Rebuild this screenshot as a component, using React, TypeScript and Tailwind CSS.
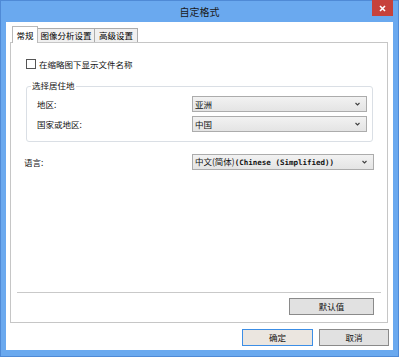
import React from "react";

const cjk = { fontFamily: '"Noto Sans CJK SC", "Microsoft YaHei", sans-serif' };

function Chevron() {
  return (
    <svg width="5" height="4" viewBox="0 0 5 4" className="shrink-0">
      <path d="M0.5 1 L2.5 3 L4.5 1" stroke="#404040" strokeWidth="1.1" fill="none" />
    </svg>
  );
}

function Select({ text, w, children }: { text?: string; w: string; children?: React.ReactNode }) {
  return (
    <div
      className={`${w} h-[16px] flex items-center justify-between pl-[2px] pr-[6px] border border-[#acacac] bg-gradient-to-b from-[#f2f2f2] to-[#e4e4e4] text-[8.5px] text-[#111] leading-none`}
    >
      <span>{children ?? text}</span>
      <Chevron />
    </div>
  );
}

function Btn({ text, w, focused }: { text: string; w: string; focused?: boolean }) {
  return (
    <div
      className={`${w} h-[17px] flex items-center justify-center text-[8.5px] leading-none text-[#111] border ${
        focused ? "border-[#3c8ee6] bg-[#ebe6e0]" : "border-[#8a8a8a] bg-[#e1e1e1]"
      }`}
    >
      {text}
    </div>
  );
}

export default function App() {
  return (
    <div className="w-[399px] h-[357px] bg-[#6aa9ef] border border-[#4f8ad6] flex flex-col" style={cjk}>
      {/* title bar */}
      <div className="h-[21px] relative flex items-center justify-center">
        <span className="text-[10px] text-[#1a1a1a] leading-none">自定格式</span>
        <div className="absolute right-[5px] top-[-1px] w-[21px] h-[16px] bg-[#c7423b] flex items-center justify-center">
          <svg width="7" height="7" viewBox="0 0 7 7">
            <path d="M1 1 L6 6 M6 1 L1 6" stroke="#fff" strokeWidth="1.6" />
          </svg>
        </div>
      </div>
      {/* client */}
      <div className="mx-[5px] h-[328px] bg-white flex flex-col px-[4px]">
        {/* tabs */}
        <div className="h-[20px] flex items-end pl-[2px] relative z-10">
          <div className="w-[26px] h-[17px] flex items-center justify-center text-[8.5px] leading-none bg-white border border-b-0 border-[#b9b9b9] mb-[-1px]">
            常规
          </div>
          <div className="w-[57px] h-[14px] flex items-center justify-center text-[8.5px] leading-none bg-[#f0f0f0] border border-b-0 border-l-0 border-[#acacac]">
            图像分析设置
          </div>
          <div className="w-[43px] h-[14px] flex items-center justify-center text-[8.5px] leading-none bg-[#f0f0f0] border border-b-0 border-l-0 border-[#acacac]">
            高级设置
          </div>
        </div>
        {/* panel */}
        <div className="w-[378px] h-[281px] border border-[#c6c6c6] flex flex-col text-[8.5px] leading-none text-[#111]">
          <div className="flex items-center mt-[16px] ml-[15px] gap-[3px]">
            <div className="w-[10px] h-[10px] border border-[#555] bg-white" />
            <span>在缩略图下显示文件名称</span>
          </div>
          {/* group box */}
          <div className="relative mt-[17px] ml-[15px] w-[347px] h-[56px] border border-[#dadfe5] rounded-[3px] flex flex-col">
            <span className="absolute left-[4px] top-[-6px] bg-white px-[1px]">选择居住地</span>
            <div className="flex items-center mt-[9px]">
              <span className="ml-[10px] w-[155px]">地区:</span>
              <Select text="亚洲" w="w-[175px]" />
            </div>
            <div className="flex items-center mt-[4px]">
              <span className="ml-[10px] w-[155px]">国家或地区:</span>
              <Select text="中国" w="w-[175px]" />
            </div>
          </div>
          <div className="flex items-center mt-[12px]">
            <span className="ml-[13px] w-[168px]">语言:</span>
            <Select w="w-[182px]">
              中文(简体)
              <span style={{ fontFamily: '"DejaVu Sans Mono", monospace', fontWeight: 700, fontSize: "7.5px" }}>
                (Chinese (Simplified))
              </span>
            </Select>
          </div>
          <div className="flex-1" />
          <div className="mx-[6px] h-[1px] bg-[#c9c9c9]" />
          <div className="flex justify-end mt-[5px] mb-[7px] mr-[13px]">
            <Btn text="默认值" w="w-[85px]" />
          </div>
        </div>
        <div className="flex justify-end gap-[6px] mt-[6px]">
          <Btn text="确定" w="w-[71px]" focused />
          <Btn text="取消" w="w-[70px]" />
        </div>
      </div>
    </div>
  );
}
